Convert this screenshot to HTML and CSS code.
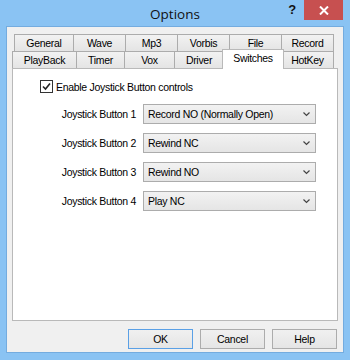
FILE: index.html
```html
<!DOCTYPE html>
<html lang="en">
<head>
  <meta charset="UTF-8">
  <meta name="viewport" content="width=device-width, initial-scale=1">
  <title>Options</title>
  <link rel="stylesheet" href="styles.css">
</head>
<body>
  <div class="window">
    <div class="titlebar">
      <span></span>
      <span class="title">Options</span>
      <div class="controls">
        <span class="help-q">?</span>
        <span class="close">
          <svg width="10" height="9" viewBox="0 0 10 9"><path d="M1 0.5 L9 8.5 M9 0.5 L1 8.5" stroke="#fff" stroke-width="2"/></svg>
        </span>
      </div>
    </div>

    <div class="client">
      <div class="tabs">
        <div class="tab-row back">
          <div class="tab">General</div>
          <div class="tab">Wave</div>
          <div class="tab">Mp3</div>
          <div class="tab">Vorbis</div>
          <div class="tab">File</div>
          <div class="tab">Record</div>
        </div>
        <div class="tab-row front">
          <div class="tab">PlayBack</div>
          <div class="tab">Timer</div>
          <div class="tab">Vox</div>
          <div class="tab">Driver</div>
          <div class="tab selected">Switches</div>
          <div class="tab">HotKey</div>
        </div>
      </div>

      <div class="panel">
        <label class="check-row">
          <span class="checkbox">
            <svg width="9" height="9" viewBox="0 0 9 9"><path d="M1 4.5 L3.5 7 L8 1.5" fill="none" stroke="#222" stroke-width="1.6"/></svg>
          </span>
          Enable Joystick Button controls
        </label>

        <div class="fields">
          <span class="field-label">Joystick Button 1</span>
          <div class="combo"><span>Record NO (Normally Open)</span><svg class="chev" width="7" height="5" viewBox="0 0 7 5"><path d="M0.5 0.5 L3.5 3.5 L6.5 0.5" fill="none" stroke="#444" stroke-width="1.2"/></svg></div>

          <span class="field-label">Joystick Button 2</span>
          <div class="combo"><span>Rewind NC</span><svg class="chev" width="7" height="5" viewBox="0 0 7 5"><path d="M0.5 0.5 L3.5 3.5 L6.5 0.5" fill="none" stroke="#444" stroke-width="1.2"/></svg></div>

          <span class="field-label">Joystick Button 3</span>
          <div class="combo"><span>Rewind NO</span><svg class="chev" width="7" height="5" viewBox="0 0 7 5"><path d="M0.5 0.5 L3.5 3.5 L6.5 0.5" fill="none" stroke="#444" stroke-width="1.2"/></svg></div>

          <span class="field-label">Joystick Button 4</span>
          <div class="combo"><span>Play NC</span><svg class="chev" width="7" height="5" viewBox="0 0 7 5"><path d="M0.5 0.5 L3.5 3.5 L6.5 0.5" fill="none" stroke="#444" stroke-width="1.2"/></svg></div>
        </div>
      </div>

      <div class="buttons">
        <button class="default">OK</button>
        <button>Cancel</button>
        <button>Help</button>
      </div>
    </div>
  </div>
</body>
</html>
```

FILE: styles.css
```css
body {
  margin: 0;
  background-color: #8ac3f3;
  font-family: 'Liberation Sans', Arial, sans-serif;
  font-size: 10.5px;
  letter-spacing: -0.3px;
  color: #000;
}

.window {
  width: 350px;
  height: 360px;
  background-color: #8ac3f3;
}

/* title bar */
.titlebar {
  height: 27px;
  display: grid;
  grid-template-columns: 1fr auto 1fr;
  align-items: start;
}

.title {
  font-family: 'Open Sans', sans-serif;
  font-size: 13.5px;
  letter-spacing: 0;
  line-height: 28px;
  color: #111;
}

.controls {
  display: flex;
  justify-content: flex-end;
  align-items: flex-start;
  padding-right: 7px;
}

.help-q {
  font-weight: bold;
  font-size: 13px;
  line-height: 20px;
  margin-right: 8px;
  color: #111;
}

.close {
  width: 39px;
  height: 20px;
  background-color: #c75050;
  display: flex;
  align-items: center;
  justify-content: center;
}

/* client area */
.client {
  margin: 0 7px;
  height: 325px;
  background-color: #f0f0f0;
  box-sizing: border-box;
  padding-top: 7px;
  box-shadow: 0 0 0 1px #74acdf;
}

.tab-row {
  display: grid;
  height: 17px;
}

.tab-row.back {
  margin-left: 7px;
  width: 320px;
  grid-template-columns: 60px repeat(5, 1fr);
}

.tab-row.front {
  margin-left: 5px;
  width: 322px;
  grid-template-columns: 65px 48px 50px 49px 58px 52px;
}

.tab {
  box-sizing: border-box;
  border: 1px solid #acacac;
  border-left: none;
  border-bottom: none;
  background: linear-gradient(#f2f2f2, #e4e4e4);
  text-align: center;
  line-height: 16px;
  white-space: nowrap;
}

.tab:first-child {
  border-left: 1px solid #acacac;
}

.tab.selected {
  position: relative;
  z-index: 1;
  margin: -2px -2px -1px -2px;
  border: 1px solid #b9b9b9;
  border-bottom: none;
  background: #fff;
  line-height: 16px;
}

/* page */
.panel {
  margin-left: 5px;
  width: 326px;
  height: 253px;
  box-sizing: border-box;
  border: 1px solid #b9b9b9;
  background-color: #fff;
  padding-top: 11px;
}

.check-row {
  display: flex;
  align-items: center;
  gap: 3px;
  margin-left: 27px;
  height: 13px;
}

.checkbox {
  width: 13px;
  height: 13px;
  box-sizing: border-box;
  border: 1px solid #333;
  background: #fff;
  display: flex;
  align-items: center;
  justify-content: center;
}

.fields {
  display: grid;
  grid-template-columns: 123px 173px;
  column-gap: 7px;
  row-gap: 9px;
  align-items: center;
  margin-top: 11px;
}

.field-label {
  text-align: right;
}

.combo {
  height: 20px;
  box-sizing: border-box;
  border: 1px solid #acacac;
  background: linear-gradient(#f2f2f2, #e5e5e5);
  display: flex;
  align-items: center;
  justify-content: space-between;
  padding: 0 5px 0 4px;
}

/* dialog buttons */
.buttons {
  display: flex;
  justify-content: flex-end;
  gap: 7px;
  margin-top: 8px;
  padding-right: 6px;
}

.buttons button {
  width: 65px;
  height: 20px;
  font-family: inherit;
  font-size: 10.5px;
  letter-spacing: -0.3px;
  border: 1px solid #acacac;
  background: linear-gradient(#f0f0f0, #e5e5e5);
  padding: 0;
  color: #000;
}

.buttons button.default {
  border-color: #5aa0e6;
}
```
